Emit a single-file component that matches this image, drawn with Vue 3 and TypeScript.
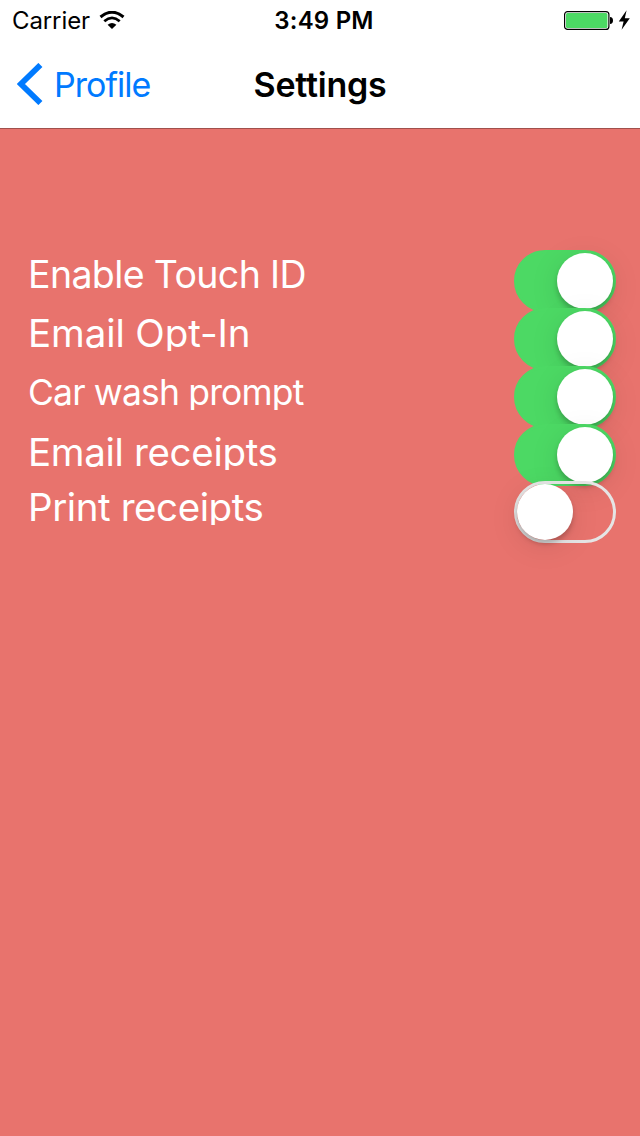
<template>
    <main class="screen">

        <header class="top">
            <!-- Status bar -->
            <div class="status">
                <div class="network">
                    <span class="carrier">Carrier</span>
                    <svg class="wifi" width="26" height="18" viewBox="0 0 26 18">
                        <path d="M1.5 6 Q13 -3.6 24.5 6" fill="none" stroke="#000" stroke-width="3" />
                        <path d="M5.3 10.2 Q13 3.6 20.7 10.2" fill="none" stroke="#000" stroke-width="2.8" />
                        <path d="M8.6 13.8 Q13 10 17.4 13.8 L13 18 Z" fill="#000" />
                    </svg>
                </div>
                <span class="time">3:49 PM</span>
                <div class="power">
                    <svg width="68" height="22" viewBox="0 0 68 22">
                        <rect x="0.6" y="1.6" width="44.3" height="17.8" rx="3" fill="#fff" stroke="#000" stroke-width="1.2" />
                        <rect x="2" y="3" width="41.4" height="15" rx="1.5" fill="#4cd964" />
                        <path d="M46 7 Q49 7.4 49 10.5 Q49 13.6 46 14 Z" fill="#000" />
                        <path d="M62.6 0.2 L54.8 11.5 L59.6 11.5 L57.6 19.8 L65.8 8.3 L60.8 8.3 Z" fill="#000" />
                    </svg>
                </div>
            </div>

            <!-- Navigation bar -->
            <nav class="nav">
                <button class="back" type="button">
                    <svg width="26" height="42" viewBox="0 0 26 42">
                        <path d="M23.4 2 L3.9 21 L23.4 40" fill="none" stroke="#007aff" stroke-width="5.8" />
                    </svg>
                    <span class="back-text">Profile</span>
                </button>
                <h1 class="title">Settings</h1>
                <div></div>
            </nav>
        </header>

        <!-- List of settings -->
        <section class="settings">
            <div class="row" v-for="item in settings" :key="item.id" :class="item.id">
                <span class="label">{{ item.label }}</span>
                <button
                    class="switch"
                    type="button"
                    role="switch"
                    :aria-checked="item.enabled"
                    :class="{ on: item.enabled }"
                    @click="toggle(item)">
                    <span class="knob"></span>
                </button>
            </div>
        </section>

    </main>
</template>

<script setup lang="ts">
import { ref } from 'vue';

interface Setting {
    id: string;
    label: string;
    enabled: boolean;
}

const settings = ref<Setting[]>([
    { id: 'touch', label: 'Enable Touch ID', enabled: true },
    { id: 'opt-in', label: 'Email Opt-In', enabled: true },
    { id: 'wash', label: 'Car wash prompt', enabled: true },
    { id: 'email', label: 'Email receipts', enabled: true },
    { id: 'print', label: 'Print receipts', enabled: false },
]);

// Switch a setting on or off
const toggle = (item: Setting) => {
    item.enabled = !item.enabled;
};
</script>

<style>
body {
    margin: 0;
    background-color: #e8736d;
}
</style>

<style scoped>
.screen {
    width: 640px;
    height: 1136px;
    overflow: hidden;
    background-color: #e8736d;
    font-family: Inter, 'Liberation Sans', sans-serif;
}

button {
    padding: 0;
    border: none;
    background: none;
    font-family: inherit;
    cursor: pointer;
}

.top {
    box-sizing: border-box;
    height: 129px;
    background-color: #fff;
    border-bottom: 1px solid #a1504c;
}

.status {
    display: grid;
    grid-template-columns: 1fr auto 1fr;
    align-items: center;
    box-sizing: border-box;
    height: 40px;
    padding: 2px 8px 0 12px;
    font-size: 24px;
    line-height: 38px;
}

.network {
    display: flex;
    align-items: center;
    gap: 9px;
}

.wifi {
    margin-bottom: 2px;
}

.carrier {
    letter-spacing: -0.1px;
}

.time {
    padding-left: 4px;
    font-weight: 600;
    letter-spacing: 0.2px;
}

.power {
    display: flex;
    justify-content: flex-end;
}

.nav {
    display: grid;
    grid-template-columns: 1fr auto 1fr;
    align-items: center;
    height: 88px;
    padding: 0 17px;
}

.back {
    display: flex;
    align-items: center;
    gap: 11px;
    color: #007aff;
    font-size: 34px;
    line-height: 42px;
}

.back-text {
    padding-top: 1px;
    letter-spacing: -0.98px;
}

.title {
    margin: 0;
    padding-top: 1px;
    font-size: 34px;
    font-weight: 600;
    letter-spacing: -0.25px;
    line-height: 42px;
}

.settings {
    padding: 121px 24px 0 28px;
}

.row {
    display: flex;
    justify-content: space-between;
    align-items: flex-start;
    height: 58px;
}

.label {
    height: 36px;
    margin-top: 7px;
    padding-right: 4px;
    overflow: hidden;
    color: #fff;
    font-size: 38.5px;
    font-weight: 400;
    letter-spacing: -0.1px;
    line-height: 36px;
    white-space: nowrap;
}

.touch .label {
    height: 48px;
    margin-top: 1px;
    font-size: 37.5px;
    letter-spacing: -0.63px;
    line-height: 48px;
}

.wash .label {
    margin-top: 8px;
    font-size: 35.5px;
    letter-spacing: -0.85px;
    line-height: 38px;
}

.email {
    height: 57px;
}

.email .label {
    margin-top: 10px;
    letter-spacing: -0.33px;
}

.print .label {
    margin-top: 8px;
    letter-spacing: -0.42px;
}

.switch {
    display: flex;
    flex-shrink: 0;
    box-sizing: border-box;
    width: 102px;
    height: 62px;
    border: 3px solid #e5e5e5;
    border-radius: 31px;
}

.switch.on {
    justify-content: flex-end;
    border-color: #4cd964;
    background-color: #4cd964;
}

.knob {
    width: 56px;
    height: 56px;
    border-radius: 50%;
    background-color: #fff;
    box-shadow: 0 6px 30px rgba(0, 0, 0, 0.1), 0 4px 5px rgba(0, 0, 0, 0.2);
}
</style>
